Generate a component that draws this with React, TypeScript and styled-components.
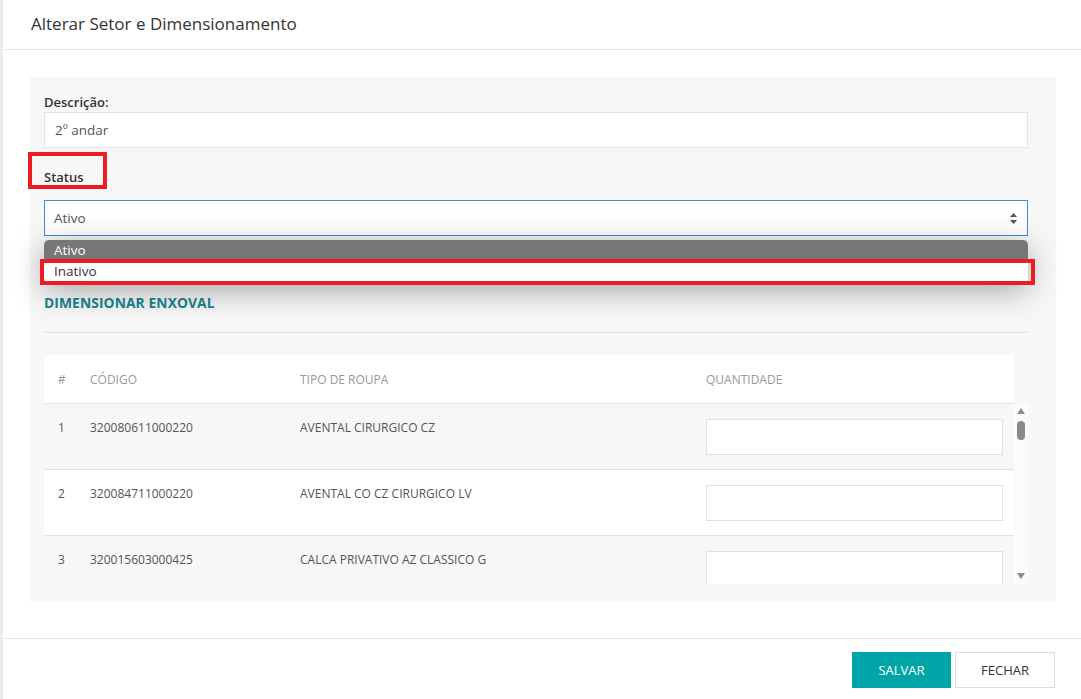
import React from 'react';
import styled, { createGlobalStyle, css } from 'styled-components';

type Item = {
  code: string;
  type: string;
};

const items: Item[] = [
  { code: '320080611000220', type: 'AVENTAL CIRURGICO CZ' },
  { code: '320084711000220', type: 'AVENTAL CO CZ CIRURGICO LV' },
  { code: '320015603000425', type: 'CALCA PRIVATIVO AZ CLASSICO G' },
];

const GlobalStyle = createGlobalStyle`
  html, body {
    margin: 0;
    padding: 0;
    background: #fff;
  }
  body {
    font-family: 'Open Sans', 'Noto Sans', sans-serif;
    font-size: 13px;
    color: #333;
  }
  * {
    box-sizing: border-box;
  }
`;

const Modal = styled.div`
  width: 1081px;
  height: 699px;
  border-left: 3px solid #ebebeb;
  display: flex;
  flex-direction: column;
  overflow: hidden;
`;

const Header = styled.div`
  height: 50px;
  padding: 0 27px;
  margin-left: 1px;
  display: flex;
  align-items: center;
  border-bottom: 1px solid #e5e5e5;
`;

const Title = styled.h4`
  margin: 0 0 2px;
  font-size: 17px;
  font-weight: 400;
  color: #333;
`;

const Body = styled.div`
  padding: 27px 25px 36px 27px;
  border-bottom: 1px solid #e5e5e5;
`;

const Panel = styled.div`
  background: #f7f7f7;
  padding: 16px 28px 18px 14px;
`;

const Field = styled.div<{ $gap: number; $top: number }>`
  display: flex;
  flex-direction: column;
  gap: ${(p) => p.$gap}px;
  margin-top: ${(p) => p.$top}px;
`;

const Label = styled.label`
  position: relative;
  font-size: 13px;
  font-weight: 600;
  line-height: 18px;
  color: #333;
`;

const TextInput = styled.div`
  height: 36px;
  padding: 0 10px;
  display: flex;
  align-items: center;
  background: #fff;
  border: 1px solid #e3e3e3;
  font-size: 13.5px;
  color: #555;
`;

const SelectWrap = styled.div`
  position: relative;
`;

const SelectBox = styled.div`
  height: 36px;
  padding: 0 10px 0 9px;
  display: flex;
  align-items: center;
  justify-content: space-between;
  background: #fff;
  border: 1px solid #3f87e3;
  font-size: 13.5px;
  color: #555;
`;

const Arrows = styled.svg`
  width: 7px;
  height: 11px;
  fill: #555;
`;

const Dropdown = styled.ul`
  position: absolute;
  top: 40px;
  left: 0;
  right: 0;
  margin: 0;
  padding: 0 0 1px;
  list-style: none;
  background: #fff;
  border-radius: 5px;
  box-shadow: 0 8px 32px rgba(0, 0, 0, 0.34);
  z-index: 2;
`;

const Option = styled.li<{ $selected?: boolean }>`
  position: relative;
  height: 20px;
  padding: 0 10px;
  line-height: 20px;
  font-size: 13.5px;
  ${(p) =>
    p.$selected
      ? css`
          background: #777;
          color: #fff;
          border-radius: 5px 5px 0 0;
        `
      : css`
          background: #fff;
          color: #333;
          margin-top: 1px;
          border-radius: 0 0 5px 5px;
        `}
`;

const Highlight = styled.span<{ $kind: 'label' | 'option' }>`
  position: absolute;
  border: 4px solid #ed1c24;
  pointer-events: none;
  ${(p) =>
    p.$kind === 'label'
      ? css`
          top: -16px;
          left: -16px;
          width: 79px;
          height: 37px;
        `
      : css`
          top: -2px;
          left: -4px;
          right: -7px;
          height: 26px;
        `}
`;

const SectionTitle = styled.h5`
  margin: 58px 0 0;
  font-size: 13.8px;
  font-weight: 700;
  line-height: 18px;
  color: #17868e;
  letter-spacing: 0.1px;
`;

const Divider = styled.hr`
  margin: 20px 0 22px;
  border: 0;
  border-top: 1px solid #e2e2e2;
`;

const columns = '32px 210px 406px 1fr';

const HeadRow = styled.div`
  width: 970px;
  height: 49px;
  display: grid;
  grid-template-columns: ${columns};
  align-items: center;
  background: #fff;
  border-bottom: 1px solid #e3e3e3;
`;

const HeadCell = styled.div`
  padding-left: 14px;
  font-size: 12px;
  color: #999;
  text-transform: uppercase;
`;

const ScrollArea = styled.div`
  display: flex;
  height: 180px;
`;

const Rows = styled.div`
  width: 970px;
  overflow: hidden;
`;

const Row = styled.div<{ $odd: boolean }>`
  height: 66px;
  display: grid;
  grid-template-columns: ${columns};
  align-items: start;
  padding-top: 15px;
  background: ${(p) => (p.$odd ? '#f7f7f7' : '#fff')};
  border-bottom: 1px solid #e3e3e3;
`;

const Cell = styled.div`
  padding-left: 14px;
  line-height: 18px;
  font-size: 12px;
  color: #555;
`;

const QtyCell = styled.div`
  padding: 0 11px 0 14px;
`;

const QtyInput = styled.input`
  width: 297px;
  height: 36px;
  border: 1px solid #e0e0e0;
  background: #fff;
  outline: none;
`;

const ScrollBar = styled.div`
  width: 14px;
  background: #fbfbfb;
  display: flex;
  flex-direction: column;
  align-items: center;
  padding: 4px 0 5px;
`;

const ArrowUp = styled.span`
  width: 0;
  height: 0;
  border-left: 4px solid transparent;
  border-right: 4px solid transparent;
  border-bottom: 6px solid #8a8a8a;
`;

const ArrowDown = styled.span`
  width: 0;
  height: 0;
  margin-top: auto;
  border-left: 4px solid transparent;
  border-right: 4px solid transparent;
  border-top: 6px solid #8a8a8a;
`;

const Thumb = styled.span`
  width: 8px;
  height: 19px;
  margin-top: 7px;
  border-radius: 4px;
  background: #8a8a8a;
`;

const Footer = styled.div`
  display: flex;
  justify-content: flex-end;
  gap: 4px;
  padding: 13px 26px 0 0;
`;

const Button = styled.button<{ $primary?: boolean }>`
  width: ${(p) => (p.$primary ? 99 : 100)}px;
  height: 36px;
  font-family: inherit;
  font-size: 13px;
  cursor: pointer;
  ${(p) =>
    p.$primary
      ? css`
          background: #00a5a7;
          color: #fff;
          border: none;
        `
      : css`
          background: #fff;
          color: #333;
          border: 1px solid #dcdcdc;
        `}
`;

const App = () => {
  return (
    <>
      <GlobalStyle />
      <Modal>
        <Header>
          <Title>Alterar Setor e Dimensionamento</Title>
        </Header>
        <Body>
          <Panel>
            <Field $gap={1} $top={0}>
              <Label>Descrição:</Label>
              <TextInput>2º andar</TextInput>
            </Field>
            <Field $gap={14} $top={20}>
              <Label>
                Status
                <Highlight $kind="label" />
              </Label>
              <SelectWrap>
                <SelectBox>
                  Ativo
                  <Arrows viewBox="0 0 7 11">
                    <path d="M3.5 0 L7 4 L0 4 Z" />
                    <path d="M0 7 L7 7 L3.5 11 Z" />
                  </Arrows>
                </SelectBox>
                <Dropdown>
                  <Option $selected>Ativo</Option>
                  <Option>
                    Inativo
                    <Highlight $kind="option" />
                  </Option>
                </Dropdown>
              </SelectWrap>
            </Field>
            <SectionTitle>DIMENSIONAR ENXOVAL</SectionTitle>
            <Divider />
            <HeadRow>
              <HeadCell>#</HeadCell>
              <HeadCell>Código</HeadCell>
              <HeadCell>Tipo de Roupa</HeadCell>
              <HeadCell>Quantidade</HeadCell>
            </HeadRow>
            <ScrollArea>
              <Rows>
                {items.map((item, i) => (
                  <Row key={item.code} $odd={i % 2 === 0}>
                    <Cell>{i + 1}</Cell>
                    <Cell>{item.code}</Cell>
                    <Cell>{item.type}</Cell>
                    <QtyCell>
                      <QtyInput type="text" />
                    </QtyCell>
                  </Row>
                ))}
              </Rows>
              <ScrollBar>
                <ArrowUp />
                <Thumb />
                <ArrowDown />
              </ScrollBar>
            </ScrollArea>
          </Panel>
        </Body>
        <Footer>
          <Button $primary>SALVAR</Button>
          <Button>FECHAR</Button>
        </Footer>
      </Modal>
    </>
  );
};

export default App;
